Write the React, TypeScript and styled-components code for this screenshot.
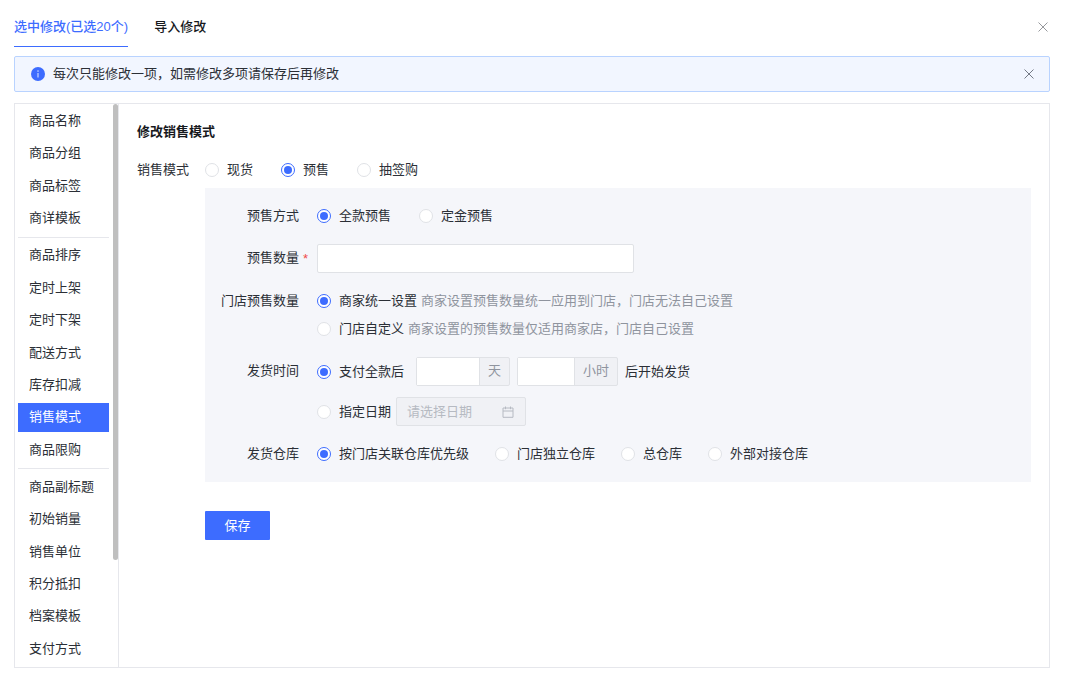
import React from "react";
import styled, { createGlobalStyle, css } from "styled-components";

const color = {
  primary: "#3d6cff",
  text: "#2b2f36",
  strong: "#17191d",
  hint: "#8f949e",
  placeholder: "#b6bac2",
  line: "#e6e7ec",
  control: "#e0e2e6",
  addon: "#f0f1f5",
  section: "#f5f6fa",
  required: "#f04a4a",
};

const GlobalStyle = createGlobalStyle`
  *, *::before, *::after { box-sizing: border-box; }
  body {
    margin: 0;
    background: #fff;
    color: ${color.text};
    font: 13px/20px "Liberation Sans", "Noto Sans CJK SC", sans-serif;
  }
  button, input { font: inherit; color: inherit; }
`;

const Page = styled.div`
  display: flex;
  flex-direction: column;
  min-height: 100vh;
  padding: 0 17px 14px 14px;
`;

const Header = styled.header`
  display: flex;
  align-items: center;
  justify-content: space-between;
  padding-top: 7px;
`;

const Tabs = styled.div`
  display: flex;
  gap: 26px;
`;

const Tab = styled.button<{ $active?: boolean }>`
  height: 40px;
  padding: 0;
  border: 0;
  border-bottom: 1px solid ${(p) => (p.$active ? color.primary : "transparent")};
  background: none;
  color: ${(p) => (p.$active ? color.primary : color.strong)};
  font-weight: 500;
  cursor: pointer;
`;

const CloseButton = styled.button<{ $dark?: boolean }>`
  display: flex;
  align-items: center;
  justify-content: center;
  width: 14px;
  height: 14px;
  padding: 0;
  border: 0;
  background: none;
  color: ${(p) => (p.$dark ? "#747a86" : "#96989c")};
  cursor: pointer;
`;

const Notice = styled.div`
  display: flex;
  align-items: center;
  gap: 8px;
  height: 36px;
  margin: 9px 0 11px;
  padding: 0 13px 1px 16px;
  border: 1px solid #b9d3ff;
  border-radius: 2px;
  background: #f2f6ff;
`;

const NoticeText = styled.span`
  flex: 1;
`;

const Panel = styled.div`
  display: flex;
  flex: 1;
  border: 1px solid ${color.line};
`;

const Sidebar = styled.nav`
  display: flex;
  gap: 4px;
  width: 104px;
  flex: none;
  padding-left: 3px;
  border-right: 1px solid ${color.line};
`;

const Menu = styled.ul`
  display: flex;
  flex: 1;
  flex-direction: column;
  justify-content: space-between;
  gap: 3px;
  margin: 0;
  padding: 3px 0;
  list-style: none;
`;

const MenuDivider = styled.li`
  height: 1px;
  background: ${color.line};
`;

const MenuLink = styled.a<{ $active?: boolean }>`
  display: block;
  padding: 4px 0 5px 11px;
  color: ${(p) => (p.$active ? "#fff" : color.text)};
  background: ${(p) => (p.$active ? color.primary : "none")};
  text-decoration: none;
  white-space: nowrap;
`;

const ScrollThumb = styled.div`
  width: 5px;
  height: 81%;
  border-radius: 3px;
  background: #bfbfbf;
`;

const Content = styled.main`
  flex: 1;
  min-width: 0;
  padding: 18px;
`;

const Title = styled.h1`
  margin: 0 0 18px;
  color: ${color.strong};
  font-size: 13px;
  font-weight: 700;
  line-height: 20px;
`;

const ModeRow = styled.div`
  display: flex;
  margin-bottom: 8px;
`;

const ModeLabel = styled.span`
  width: 68px;
`;

const Indented = styled.div`
  margin-left: 68px;
`;

const Section = styled.div`
  display: flex;
  flex-direction: column;
  gap: 18px;
  padding: 18px 0;
  background: ${color.section};
`;

const FieldRow = styled.div`
  display: flex;
  gap: 8px;
`;

const FieldLabel = styled.div<{ $tall?: boolean }>`
  display: flex;
  justify-content: flex-end;
  gap: 4px;
  width: 104px;
  flex: none;
  line-height: ${(p) => (p.$tall ? "28px" : "20px")};
`;

const Mark = styled.span`
  width: 6px;
  padding-top: 1px;
  color: ${color.required};
`;

const Options = styled.div<{ $gap?: number }>`
  display: flex;
  flex-wrap: wrap;
  gap: ${(p) => p.$gap ?? 28}px;
`;

const Stack = styled.div<{ $gap: number }>`
  display: flex;
  flex-direction: column;
  gap: ${(p) => p.$gap}px;
`;

const Line = styled.div<{ $gap: number }>`
  display: flex;
  align-items: center;
  gap: ${(p) => p.$gap}px;
`;

const RadioLabel = styled.label`
  display: flex;
  align-items: center;
  gap: 8px;
  white-space: nowrap;
  cursor: pointer;
`;

const RadioInput = styled.input`
  appearance: none;
  display: grid;
  place-items: center;
  width: 14px;
  height: 14px;
  flex: none;
  margin: 0;
  border: 1px solid ${color.control};
  border-radius: 50%;
  background: #fff;
  &:checked {
    border-color: ${color.primary};
  }
  &:checked::before {
    content: "";
    width: 8px;
    height: 8px;
    border-radius: 50%;
    background: ${color.primary};
  }
`;

const Hint = styled.span`
  color: ${color.hint};
`;

const box = css`
  height: 29px;
  border: 1px solid ${color.control};
  border-radius: 2px;
`;

const TextInput = styled.input`
  ${box}
  width: 317px;
  padding: 0 10px;
  background: #fff;
`;

const UnitBox = styled.label<{ $width: number }>`
  ${box}
  display: flex;
  width: ${(p) => p.$width}px;
  background: ${color.addon};
`;

const UnitInput = styled.input`
  flex: 1;
  min-width: 0;
  padding: 0 8px;
  border: 0;
  border-right: 1px solid ${color.control};
  background: #fff;
`;

const Unit = styled.span`
  padding: 3px 8px;
  color: ${color.hint};
`;

const UnitFields = styled.div`
  display: flex;
  gap: 7px;
  align-items: center;
`;

const DateBox = styled.div`
  ${box}
  display: flex;
  align-items: center;
  width: 130px;
  padding: 0 11px 0 10px;
  background: ${color.addon};
  color: ${color.placeholder};
`;

const DateInput = styled.input`
  flex: 1;
  min-width: 0;
  height: 24px;
  padding: 0;
  border: 0;
  background: none;
  &::placeholder {
    color: ${color.placeholder};
    opacity: 1;
  }
`;

const SaveButton = styled.button`
  width: 65px;
  height: 29px;
  margin-top: 29px;
  padding: 0;
  border: 0;
  border-radius: 1px;
  background: ${color.primary};
  color: #fff;
  cursor: pointer;
`;

const CrossIcon = () => (
  <svg width="10" height="10" viewBox="0 0 10 10" aria-hidden="true">
    <path d="M0.5 0.5 9.5 9.5M9.5 0.5 0.5 9.5" fill="none" stroke="currentColor" strokeWidth="1" />
  </svg>
);

const InfoIcon = () => (
  <svg width="14" height="14" viewBox="0 0 14 14" aria-hidden="true">
    <circle cx="7" cy="7" r="7" fill={color.primary} />
    <circle cx="7" cy="4.1" r="0.8" fill="#c9d7ff" />
    <path d="M7 6v4.6" stroke="#c9d7ff" strokeWidth="1.2" />
  </svg>
);

const CalendarIcon = () => (
  <svg width="12" height="12" viewBox="0 0 12 12" aria-hidden="true">
    <path
      d="M1 2H11V11.3H1ZM1 5H11M3.5 0.5V3.2M8.5 0.5V3.2"
      fill="none"
      stroke="currentColor"
      strokeWidth="1"
    />
  </svg>
);

const menuGroups = [
  ["商品名称", "商品分组", "商品标签", "商详模板"],
  ["商品排序", "定时上架", "定时下架", "配送方式", "库存扣减", "销售模式", "商品限购"],
  ["商品副标题", "初始销量", "销售单位", "积分抵扣", "档案模板", "支付方式"],
];

function Radio({ name, label, checked }: { name: string; label: string; checked?: boolean }) {
  return (
    <RadioLabel>
      <RadioInput type="radio" name={name} defaultChecked={checked} />
      {label}
    </RadioLabel>
  );
}

function Field({
  label,
  tall,
  htmlFor,
  required,
  children,
}: {
  label: string;
  tall?: boolean;
  htmlFor?: string;
  required?: boolean;
  children: React.ReactNode;
}) {
  return (
    <FieldRow>
      <FieldLabel $tall={tall}>
        {htmlFor ? <label htmlFor={htmlFor}>{label}</label> : <span>{label}</span>}
        <Mark>{required ? "*" : ""}</Mark>
      </FieldLabel>
      {children}
    </FieldRow>
  );
}

export default function App() {
  return (
    <Page>
      <GlobalStyle />
      <Header>
        <Tabs role="tablist">
          <Tab role="tab" aria-selected="true" $active>
            选中修改(已选20个)
          </Tab>
          <Tab role="tab" aria-selected="false">
            导入修改
          </Tab>
        </Tabs>
        <CloseButton aria-label="关闭">
          <CrossIcon />
        </CloseButton>
      </Header>

      <Notice>
        <InfoIcon />
        <NoticeText>每次只能修改一项，如需修改多项请保存后再修改</NoticeText>
        <CloseButton $dark aria-label="关闭提示">
          <CrossIcon />
        </CloseButton>
      </Notice>

      <Panel>
        <Sidebar>
          <Menu>
            {menuGroups.map((group, index) => (
              <React.Fragment key={group[0]}>
                {index > 0 && <MenuDivider role="separator" />}
                {group.map((item) => (
                  <li key={item}>
                    <MenuLink href="#" $active={item === "销售模式"}>
                      {item}
                    </MenuLink>
                  </li>
                ))}
              </React.Fragment>
            ))}
          </Menu>
          <ScrollThumb aria-hidden="true" />
        </Sidebar>

        <Content>
          <Title>修改销售模式</Title>
          <ModeRow>
            <ModeLabel>销售模式</ModeLabel>
            <Options role="radiogroup" aria-label="销售模式">
              <Radio name="mode" label="现货" />
              <Radio name="mode" label="预售" checked />
              <Radio name="mode" label="抽签购" />
            </Options>
          </ModeRow>

          <Indented>
            <Section>
              <Field label="预售方式">
                <Options role="radiogroup" aria-label="预售方式">
                  <Radio name="method" label="全款预售" checked />
                  <Radio name="method" label="定金预售" />
                </Options>
              </Field>

              <Field label="预售数量" tall required htmlFor="quantity">
                <TextInput id="quantity" type="text" />
              </Field>

              <Field label="门店预售数量">
                <Stack $gap={8} role="radiogroup" aria-label="门店预售数量">
                  <Line $gap={4}>
                    <Radio name="store" label="商家统一设置" checked />
                    <Hint>商家设置预售数量统一应用到门店，门店无法自己设置</Hint>
                  </Line>
                  <Line $gap={4}>
                    <Radio name="store" label="门店自定义" />
                    <Hint>商家设置的预售数量仅适用商家店，门店自己设置</Hint>
                  </Line>
                </Stack>
              </Field>

              <Field label="发货时间" tall>
                <Stack $gap={11} role="radiogroup" aria-label="发货时间">
                  <Line $gap={12}>
                    <Radio name="time" label="支付全款后" checked />
                    <UnitFields>
                      <UnitBox $width={94}>
                        <UnitInput type="text" />
                        <Unit>天</Unit>
                      </UnitBox>
                      <UnitBox $width={101}>
                        <UnitInput type="text" />
                        <Unit>小时</Unit>
                      </UnitBox>
                      <span>后开始发货</span>
                    </UnitFields>
                  </Line>
                  <Line $gap={5}>
                    <Radio name="time" label="指定日期" />
                    <DateBox>
                      <DateInput type="text" placeholder="请选择日期" aria-label="指定日期" disabled />
                      <CalendarIcon />
                    </DateBox>
                  </Line>
                </Stack>
              </Field>

              <Field label="发货仓库">
                <Options $gap={26} role="radiogroup" aria-label="发货仓库">
                  <Radio name="warehouse" label="按门店关联仓库优先级" checked />
                  <Radio name="warehouse" label="门店独立仓库" />
                  <Radio name="warehouse" label="总仓库" />
                  <Radio name="warehouse" label="外部对接仓库" />
                </Options>
              </Field>
            </Section>
            <SaveButton type="button">保存</SaveButton>
          </Indented>
        </Content>
      </Panel>
    </Page>
  );
}
